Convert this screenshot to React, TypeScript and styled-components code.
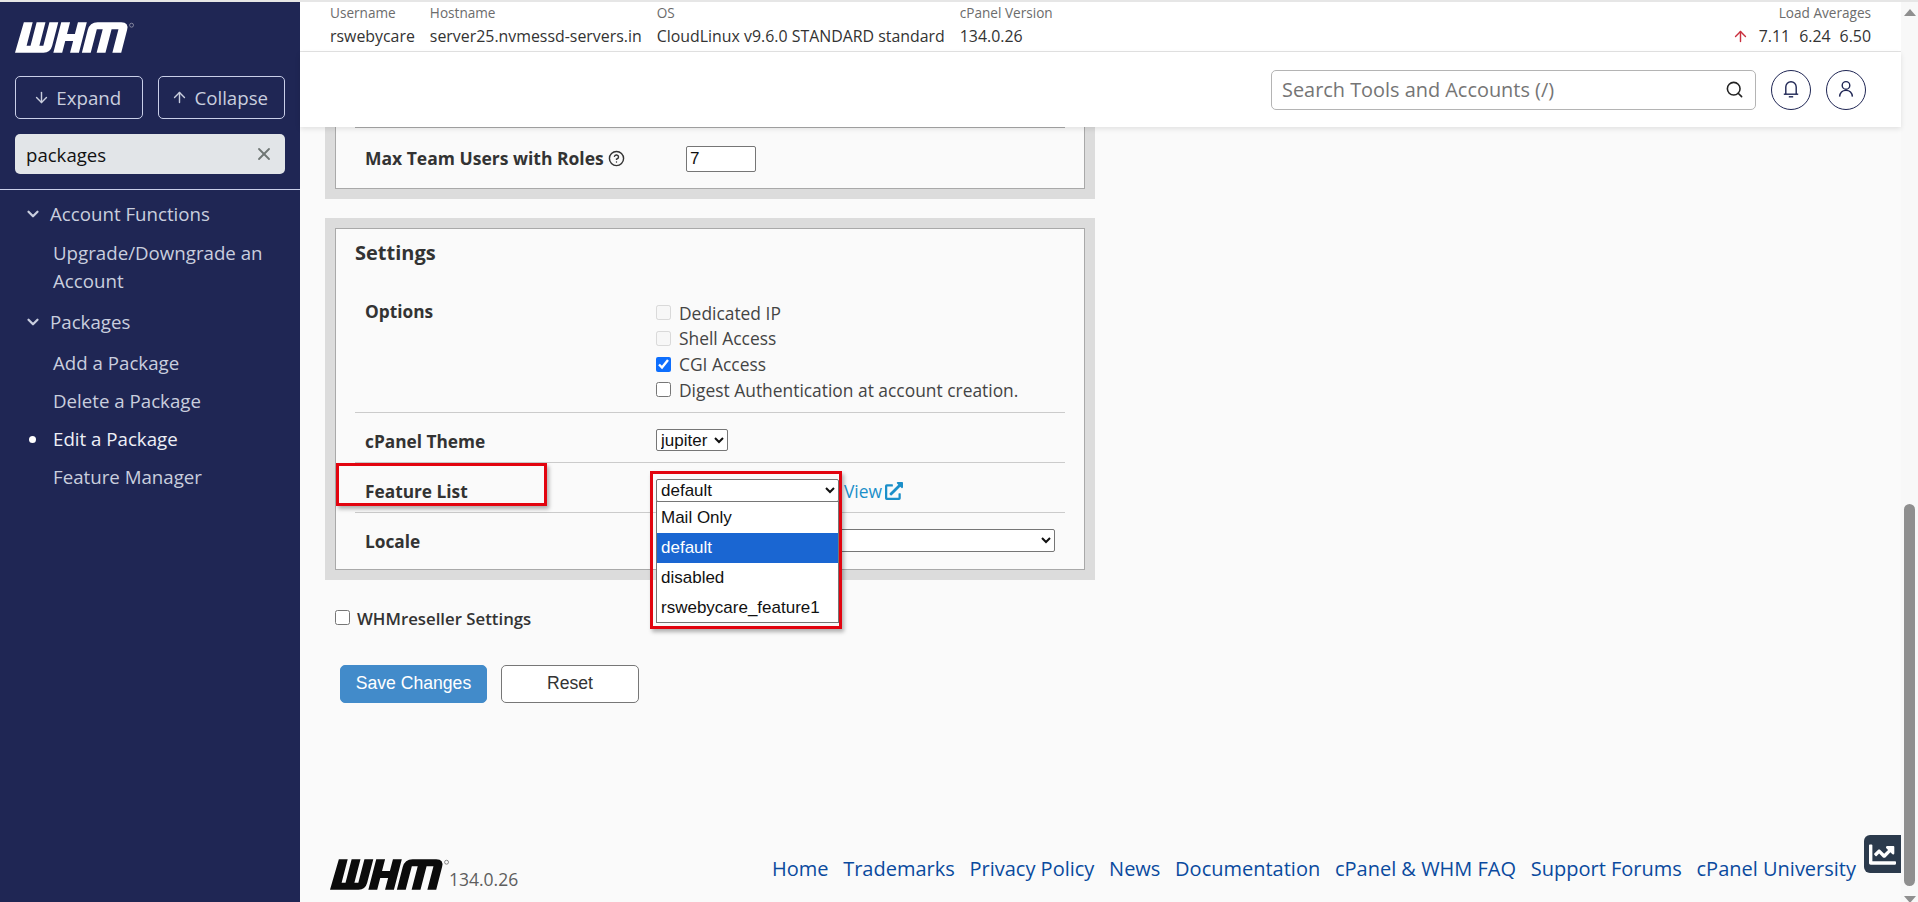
import React from 'react';
import styled, { createGlobalStyle } from 'styled-components';
import { ArrowDown, ArrowUp, ChevronDown, CircleHelp, Search, X } from 'lucide-react';
import { FaChartLine, FaExternalLinkAlt } from 'react-icons/fa';

const serverInfo = [
  { label: 'Username', value: 'rswebycare' },
  { label: 'Hostname', value: 'server25.nvmessd-servers.in' },
  { label: 'OS', value: 'CloudLinux v9.6.0 STANDARD standard' },
  { label: 'cPanel Version', value: '134.0.26' },
];

const footerLinks = [
  'Home',
  'Trademarks',
  'Privacy Policy',
  'News',
  'Documentation',
  'cPanel & WHM FAQ',
  'Support Forums',
  'cPanel University',
];

function WhmLogo({ color, ringColor }: { color: string; ringColor: string }) {
  return (
    <svg width="120" height="31" viewBox="0 0 122 31" aria-label="WHM">
      <g transform="translate(8 0) skewX(-14.5)" fill={color}>
        <path d="M1 0H10V24H14V0H23V24H27V0H36V24Q36 31 29 31H0Z" />
        <path d="M39 0H48V12H56V0H65V31H56V19H48V31H39Z" />
        <path d="M68 31V8Q68 0 76 0H100Q108 0 108 8V31H99V7H92V31H83V7H77V31Z" />
      </g>
      <circle cx="118.5" cy="3" r="2" fill="none" stroke={ringColor} strokeWidth="0.7" />
    </svg>
  );
}

function BellIcon() {
  return (
    <svg width="24" height="24" viewBox="0 0 24 24" fill="none" stroke="#1f2654" strokeWidth="1.4">
      <path d="M6.8 16V9a5.2 5.2 0 0 1 10.4 0v7" />
      <path d="M4.8 16.2H19.2" />
      <path d="M9.8 18.8H14.2" />
    </svg>
  );
}

function UserIcon() {
  return (
    <svg width="24" height="24" viewBox="0 0 24 24" fill="none" stroke="#1f2654" strokeWidth="1.4">
      <circle cx="12" cy="7.4" r="3.8" />
      <path d="M5.6 18.6C6 14.4 8.8 12.4 12 12.4s6 2 6.4 6.2" />
    </svg>
  );
}

export default function App() {
  return (
    <>
      <GlobalStyle />
      <Page>
        <Sidebar>
          <SideLogo>
            <WhmLogo color="#fff" ringColor="#aab" />
          </SideLogo>
          <ToggleRow>
            <ToggleButton>
              <ArrowDown size={17} strokeWidth={2} />
              Expand
            </ToggleButton>
            <ToggleButton>
              <ArrowUp size={17} strokeWidth={2} />
              Collapse
            </ToggleButton>
          </ToggleRow>
          <FilterBox>
            <FilterInput defaultValue="packages" />
            <X size={20} strokeWidth={2.2} color="#6f7674" />
          </FilterBox>
          <SideDivider />
          <Nav>
            <NavHeading>
              <ChevronDown size={18} strokeWidth={3} />
              Account Functions
            </NavHeading>
            <NavList $top={13}>
              <NavItem>Upgrade/Downgrade an Account</NavItem>
            </NavList>
            <NavHeading $spaced>
              <ChevronDown size={18} strokeWidth={3} />
              Packages
            </NavHeading>
            <NavList $top={15}>
              <NavItem>Add a Package</NavItem>
              <NavItem>Delete a Package</NavItem>
              <NavItem $active>Edit a Package</NavItem>
              <NavItem>Feature Manager</NavItem>
            </NavList>
          </Nav>
        </Sidebar>

        <Main>
          <InfoStrip>
            {serverInfo.map((item) => (
              <InfoCell key={item.label}>
                <InfoLabel>{item.label}</InfoLabel>
                <InfoValue>{item.value}</InfoValue>
              </InfoCell>
            ))}
            <LoadCell>
              <InfoLabel>Load Averages</InfoLabel>
              <LoadValues>
                <ArrowUp size={17} strokeWidth={2} color="#c9303e" />
                <span>7.11</span>
                <span>6.24</span>
                <span>6.50</span>
              </LoadValues>
            </LoadCell>
          </InfoStrip>

          <TopBar>
            <SearchBox>
              <SearchInput placeholder="Search Tools and Accounts (/)" />
              <Search size={19} strokeWidth={2} color="#222" />
            </SearchBox>
            <RoundButton>
              <BellIcon />
            </RoundButton>
            <RoundButton>
              <UserIcon />
            </RoundButton>
          </TopBar>

          <Content>
            <TopPanel>
              <PanelInner $open>
                <TeamRow>
                  <RowLabel $width={321} $size={17.5}>
                    Max Team Users with Roles
                    <CircleHelp size={17} strokeWidth={2} />
                  </RowLabel>
                  <TeamInput defaultValue="7" />
                </TeamRow>
              </PanelInner>
            </TopPanel>

            <SettingsPanel>
              <PanelInner>
                <PanelTitle>Settings</PanelTitle>
                <OptionsRow>
                  <RowLabel>Options</RowLabel>
                  <CheckList>
                    <CheckRow $muted>
                      <input type="checkbox" disabled />
                      Dedicated IP
                    </CheckRow>
                    <CheckRow $muted>
                      <input type="checkbox" disabled />
                      Shell Access
                    </CheckRow>
                    <CheckRow>
                      <input type="checkbox" defaultChecked />
                      CGI Access
                    </CheckRow>
                    <CheckRow>
                      <input type="checkbox" />
                      Digest Authentication at account creation.
                    </CheckRow>
                  </CheckList>
                </OptionsRow>

                <FieldRow>
                  <RowLabel>cPanel Theme</RowLabel>
                  <NativeSelect $width={72} $height={22}>
                    <option>jupiter</option>
                  </NativeSelect>
                </FieldRow>

                <FieldRow>
                  <LabelHighlight />
                  <RowLabel>Feature List</RowLabel>
                  <SelectHolder>
                    <NativeSelect $width={183} $height={23}>
                      <option>default</option>
                    </NativeSelect>
                    <SelectHighlight />
                    <ListBox>
                      <ListOption>Mail Only</ListOption>
                      <ListOption $selected>default</ListOption>
                      <ListOption>disabled</ListOption>
                      <ListOption>rswebycare_feature1</ListOption>
                    </ListBox>
                  </SelectHolder>
                  <ViewLink>
                    View
                    <FaExternalLinkAlt size={18} />
                  </ViewLink>
                </FieldRow>

                <FieldRow $last>
                  <RowLabel>Locale</RowLabel>
                  <NativeSelect $width={399} $height={23}>
                    <option></option>
                  </NativeSelect>
                </FieldRow>
              </PanelInner>
            </SettingsPanel>

            <ResellerRow>
              <input type="checkbox" />
              WHMreseller Settings
            </ResellerRow>

            <ActionRow>
              <SaveButton>Save Changes</SaveButton>
              <ResetButton>Reset</ResetButton>
            </ActionRow>

            <Footer>
              <FooterBrand>
                <WhmLogo color="#0b0b0b" ringColor="#555" />
                <FooterVersion>134.0.26</FooterVersion>
              </FooterBrand>
              <FooterLinks>
                {footerLinks.map((link) => (
                  <FooterLink key={link}>{link}</FooterLink>
                ))}
              </FooterLinks>
            </Footer>
          </Content>

          <ChartButton>
            <FaChartLine size={27} />
          </ChartButton>
        </Main>

        <ScrollTrack>
          <ScrollArrow />
          <ScrollThumb />
          <ScrollArrow $down />
        </ScrollTrack>
      </Page>
    </>
  );
}

const GlobalStyle = createGlobalStyle`
  html, body {
    margin: 0;
    padding: 0;
    overflow: hidden;
  }

  body {
    font-family: 'Open Sans', 'Liberation Sans', sans-serif;
    color: #333;
    background: #fafafa;
  }
`;

const Page = styled.div`
  display: flex;
  box-sizing: border-box;
  width: 1918px;
  height: 902px;
  border-top: 2px solid #e6e6e6;
  overflow: hidden;
`;

const Sidebar = styled.aside`
  flex: 0 0 300px;
  min-width: 0;
  background: #1f2654;
  color: #c9cede;
  font-size: 18.7px;
`;

const SideLogo = styled.div`
  padding: 20px 0 0 15px;
  height: 32px;

  svg {
    display: block;
  }
`;

const ToggleRow = styled.div`
  display: flex;
  gap: 15px;
  margin: 22px 15px 0;
`;

const ToggleButton = styled.button`
  flex: 1 1 0;
  min-width: 0;
  display: flex;
  align-items: center;
  justify-content: center;
  gap: 6px;
  height: 43px;
  padding: 0 3px 0 0;
  border: 1px solid #c9cfe8;
  border-radius: 5px;
  background: transparent;
  color: #c9cede;
  font: 400 18.7px 'Open Sans', sans-serif;
`;

const FilterBox = styled.div`
  display: flex;
  align-items: center;
  height: 40px;
  margin: 15px 15px 0;
  padding: 0 11px;
  border-radius: 5px;
  background: #e2e5e8;
`;

const FilterInput = styled.input`
  flex: 1;
  width: 0;
  min-width: 0;
  border: 0;
  outline: 0;
  padding: 0;
  background: transparent;
  color: #111;
  font: 400 18.6px 'Open Sans', sans-serif;
`;

const SideDivider = styled.hr`
  margin: 15px 0 0;
  border: 0;
  border-top: 1px solid #c9cfe8;
`;

const Nav = styled.nav`
  padding-top: 12px;
`;

const NavHeading = styled.div<{ $spaced?: boolean }>`
  display: flex;
  align-items: center;
  gap: 16px;
  height: 24px;
  margin-top: ${(p) => (p.$spaced ? '15px' : '0')};
  padding-left: 24px;
  line-height: 24px;

  svg {
    margin-right: -8px;
    flex: none;
  }
`;

const NavList = styled.ul<{ $top: number }>`
  display: flex;
  flex-direction: column;
  gap: 10px;
  margin: ${(p) => p.$top}px 0 0;
  padding: 0 30px 0 53px;
  list-style: none;
`;

const NavItem = styled.li<{ $active?: boolean }>`
  position: relative;
  line-height: 28px;
  color: ${(p) => (p.$active ? '#eef0f7' : '#c9cede')};

  &::before {
    content: '';
    display: ${(p) => (p.$active ? 'block' : 'none')};
    position: absolute;
    left: -24px;
    top: 11px;
    width: 7px;
    height: 7px;
    border-radius: 50%;
    background: #fff;
  }
`;

const Main = styled.main`
  position: relative;
  flex: 1;
  min-width: 0;
  display: flex;
  flex-direction: column;
  background: #fafafa;
`;

const InfoStrip = styled.div`
  display: flex;
  gap: 15px;
  height: 49px;
  padding: 0 30px;
  border-bottom: 1px solid #e3e3e3;
  background: #fff;
`;

const InfoCell = styled.div`
  padding-top: 1px;
  white-space: nowrap;
`;

const InfoLabel = styled.div`
  font-size: 13.6px;
  line-height: 20px;
  color: #6c6c6c;
`;

const InfoValue = styled.div`
  font-size: 15.9px;
  line-height: 26px;
  color: #333;
`;

const LoadCell = styled(InfoCell)`
  margin-left: auto;
  text-align: right;
`;

const LoadValues = styled(InfoValue)`
  display: flex;
  align-items: center;
  justify-content: flex-end;
  gap: 9px;

  svg {
    margin-right: 1px;
  }
`;

const TopBar = styled.header`
  position: relative;
  z-index: 2;
  flex: none;
  display: flex;
  align-items: center;
  justify-content: flex-end;
  gap: 15px;
  height: 75px;
  padding-right: 35px;
  background: #fff;
  box-shadow: 0 2px 5px rgba(0, 0, 0, 0.1);
`;

const SearchBox = styled.div`
  box-sizing: border-box;
  display: flex;
  align-items: center;
  width: 485px;
  height: 40px;
  padding: 0 11px 0 10px;
  border: 1px solid #b4b4b4;
  border-radius: 5px;
`;

const SearchInput = styled.input`
  flex: 1;
  border: 0;
  outline: 0;
  padding: 0;
  background: transparent;
  font: 400 19.9px 'Open Sans', sans-serif;

  &::placeholder {
    color: #757575;
    opacity: 1;
  }
`;

const RoundButton = styled.button`
  display: flex;
  align-items: center;
  justify-content: center;
  width: 40px;
  height: 40px;
  padding: 0;
  border: 1px solid #1f2654;
  border-radius: 50%;
  background: #fff;
`;

const Content = styled.div`
  flex: 1;
  min-height: 0;
  display: flex;
  flex-direction: column;
  padding: 0 45px 0 25px;
`;

const TopPanel = styled.section`
  width: 770px;
  box-sizing: border-box;
  padding: 0 10px 10px;
  background: #dcdcdc;
`;

const SettingsPanel = styled(TopPanel)`
  margin-top: 19px;
  padding-top: 10px;
`;

const PanelInner = styled.div<{ $open?: boolean }>`
  padding: 0 19px;
  background: #fafafa;
  border: 1px solid #a9a9a9;
  border-top-width: ${(p) => (p.$open ? '0' : '1px')};
`;

const TeamRow = styled.div`
  display: flex;
  align-items: flex-start;
  height: 61px;
  box-sizing: border-box;
  padding: 18px 0 0 10px;
  border-top: 1px solid #ababab;
`;

const RowLabel = styled.div<{ $width?: number; $size?: number }>`
  display: flex;
  align-items: center;
  gap: 4px;
  flex: 0 0 ${(p) => p.$width ?? 291}px;
  font-size: ${(p) => p.$size ?? 17.3}px;
  font-weight: 700;
  line-height: 24px;
  color: #333;
`;

const TeamInput = styled.input`
  box-sizing: border-box;
  width: 70px;
  height: 26px;
  padding: 1px 3px;
  border: 1px solid #767676;
  border-radius: 2px;
  background: #fff;
  color: #111;
  font: 400 17px 'Liberation Sans', Arial, sans-serif;
`;

const PanelTitle = styled.h2`
  margin: 0;
  padding-top: 12px;
  font-size: 20px;
  font-weight: 700;
  line-height: 24px;
  color: #333;
`;

const OptionsRow = styled.div`
  display: flex;
  align-items: flex-start;
  padding: 35px 0 9px 10px;
  border-bottom: 1px solid #cbcbcb;
`;

const CheckList = styled.div`
  display: flex;
  flex-direction: column;
`;

const CheckRow = styled.label<{ $muted?: boolean }>`
  display: flex;
  align-items: center;
  gap: 8px;
  height: 25.67px;
  font-size: 17.4px;
  white-space: nowrap;
  color: #444;

  input {
    width: 15px;
    height: 15px;
    margin: 0;
    accent-color: #0d6efd;
    ${(p) => (p.$muted ? 'opacity: 0.75;' : '')}
  }
`;

const FieldRow = styled.div<{ $last?: boolean }>`
  position: relative;
  display: flex;
  align-items: flex-start;
  height: ${(p) => (p.$last ? '56px' : '50px')};
  box-sizing: border-box;
  padding: 16px 0 0 10px;
  border-bottom: ${(p) => (p.$last ? '0' : '1px solid #cbcbcb')};

  ${RowLabel} {
    margin-top: 1.5px;
  }
`;

const NativeSelect = styled.select<{ $width: number; $height: number }>`
  box-sizing: border-box;
  width: ${(p) => p.$width}px;
  height: ${(p) => p.$height}px;
  padding: 0;
  border: 1px solid #767676;
  border-radius: 2px;
  background: #fff;
  color: #111;
  font: 400 17px 'Liberation Sans', Arial, sans-serif;
`;

const LabelHighlight = styled.div`
  position: absolute;
  left: -19px;
  top: 0;
  width: 211px;
  height: 43px;
  box-sizing: border-box;
  border: 3px solid #e2040f;
  box-shadow: 2px 3px 4px rgba(0, 0, 0, 0.3);
`;

const SelectHolder = styled.div`
  position: relative;
  z-index: 1;
  height: 23px;
`;

const SelectHighlight = styled.div`
  position: absolute;
  z-index: 2;
  left: -6px;
  top: -7.5px;
  width: 192px;
  height: 158px;
  box-sizing: border-box;
  border: 3px solid #e2040f;
  box-shadow: 2px 3px 4px rgba(0, 0, 0, 0.3);
  pointer-events: none;
`;

const ListBox = styled.div`
  position: absolute;
  left: 0;
  top: 22.5px;
  width: 183px;
  height: 122px;
  box-sizing: border-box;
  padding-top: 1px;
  border: 1px solid #767676;
  background: #fff;
`;

const ListOption = styled.div<{ $selected?: boolean }>`
  height: 30px;
  padding-left: 4px;
  background: ${(p) => (p.$selected ? '#1a66d2' : 'transparent')};
  color: ${(p) => (p.$selected ? '#fff' : '#111')};
  font: 400 17px/30px 'Liberation Sans', Arial, sans-serif;
`;

const ViewLink = styled.a`
  display: flex;
  align-items: center;
  gap: 3px;
  height: 24px;
  margin-left: 5px;
  font-size: 17.4px;
  color: #1b8fc9;
`;

const ResellerRow = styled.label`
  display: flex;
  align-items: center;
  gap: 7px;
  margin: 27px 0 0 10px;
  font-size: 16.8px;
  font-weight: 600;
  line-height: 24px;
  color: #333;

  input {
    width: 15px;
    height: 15px;
    margin: -3px 0 0;
  }
`;

const ActionRow = styled.div`
  display: flex;
  gap: 14px;
  margin: 34px 0 0 15px;
`;

const SaveButton = styled.button`
  width: 147px;
  height: 38px;
  padding: 0;
  border: 1px solid #428bca;
  border-radius: 5px;
  background: #428bca;
  color: #fff;
  font: 400 17.6px 'Liberation Sans', Arial, sans-serif;
`;

const ResetButton = styled(SaveButton)`
  width: 138px;
  border-color: #777;
  background: #fff;
  color: #333;
`;

const Footer = styled.footer`
  display: flex;
  align-items: flex-start;
  justify-content: space-between;
  margin-top: auto;
  padding: 0 0 12px 5px;
`;

const FooterBrand = styled.div`
  display: flex;
  align-items: flex-end;
  padding-top: 1px;

  svg {
    display: block;
  }
`;

const FooterVersion = styled.span`
  margin-left: -1px;
  font-size: 17.5px;
  line-height: 22px;
  color: #5e5e5e;
`;

const FooterLinks = styled.nav`
  display: flex;
  gap: 14.7px;
  margin-top: -1px;
`;

const FooterLink = styled.a`
  font-size: 20px;
  line-height: 24px;
  color: #0a4a9e;
`;

const ChartButton = styled.button`
  position: absolute;
  right: 0;
  bottom: 29px;
  display: flex;
  align-items: center;
  justify-content: center;
  width: 37px;
  height: 38px;
  padding: 0;
  border: 0;
  border-radius: 6px 0 0 6px;
  background: #2b3a4c;
  color: #fff;
`;

const ScrollTrack = styled.div`
  flex: 0 0 17px;
  display: flex;
  flex-direction: column;
  align-items: center;
  background: #f8f8f8;
`;

const ScrollThumb = styled.div`
  width: 11px;
  height: 382px;
  margin: auto 0 10px;
  border-radius: 6px;
  background: #8f8f8f;
`;

const ScrollArrow = styled.div<{ $down?: boolean }>`
  flex: none;
  width: 0;
  height: 0;
  margin: ${(p) => (p.$down ? '0 0 -1px' : '7px 0 0')};
  border-left: 6px solid transparent;
  border-right: 6px solid transparent;
  border-${(p) => (p.$down ? 'top' : 'bottom')}: 7px solid #8f8f8f;
`;
